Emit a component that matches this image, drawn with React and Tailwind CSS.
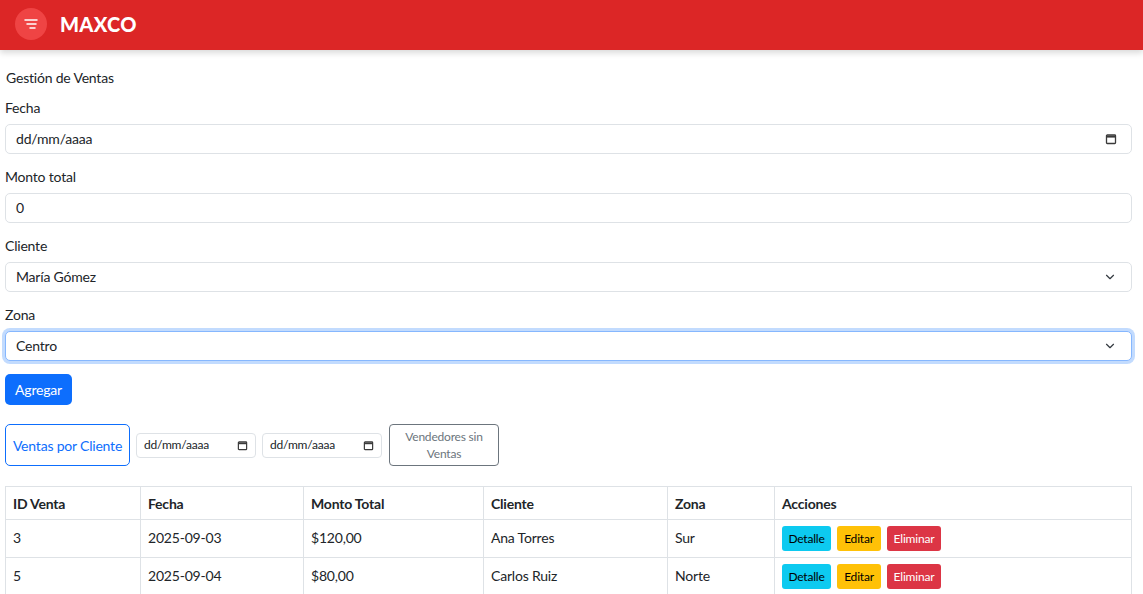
import React from 'react';
import { ChevronDown } from 'lucide-react';

const FONT = { fontFamily: 'Lato, "Noto Sans", sans-serif' };

const VENTAS = [
  { id: 3, fecha: '2025-09-03', monto: '$120,00', cliente: 'Ana Torres', zona: 'Sur' },
  { id: 5, fecha: '2025-09-04', monto: '$80,00', cliente: 'Carlos Ruiz', zona: 'Norte' },
];

const CalendarIcon = ({ size = 12 }) => (
  <svg width={size} height={size} viewBox="0 0 12 12" fill="none" stroke="#3a3a3a">
    <rect x="1.5" y="2" width="9" height="8.5" rx="0.8" strokeWidth="1.3" />
    <line x1="1.5" y1="3.6" x2="10.5" y2="3.6" strokeWidth="2" />
  </svg>
);

const Field = ({ label, children }) => (
  <div className="mb-[13px]">
    <div className="mb-[5px] h-[21px] text-[14px] leading-[20px] text-[#212529]">{label}</div>
    {children}
  </div>
);

const Box = ({ children, focus }) => (
  <div
    className={`flex h-[30px] items-center justify-between rounded-[5px] border bg-white pl-[10px] pr-[14px] text-[14px] leading-[20px] text-[#212529] ${
      focus ? 'border-[#86b7fe] shadow-[0_0_0_3px_rgba(13,110,253,0.25)]' : 'border-[#dee2e6]'
    }`}
  >
    {children}
  </div>
);

export default function App() {
  return (
    <div className="min-h-screen bg-white" style={FONT}>
      <header className="flex h-[50px] items-center gap-[13px] bg-[#dc2626] pb-[3px] pl-[15px] shadow-[0_3px_6px_rgba(0,0,0,0.15)]">
        <button className="flex h-8 w-8 items-center justify-center rounded-full bg-[#ef4444]">
          <svg width="14" height="12" viewBox="0 0 14 12" stroke="white" strokeWidth="1.5" strokeLinecap="round">
            <line x1="1" y1="2" x2="13" y2="2" />
            <line x1="3" y1="6" x2="12" y2="6" />
            <line x1="6" y1="10" x2="11" y2="10" />
          </svg>
        </button>
        <span className="text-[20px] font-black leading-none tracking-[0.3px] text-white">MAXCO</span>
      </header>

      <main className="pl-[5px] pr-[11px] pt-[18px] tracking-[-0.2px]">
        <div className="mb-[9px] h-[21px] pl-px text-[14px] leading-[20px] text-[#212529]">Gestión de Ventas</div>

        <Field label="Fecha">
          <Box>
            <span>dd/mm/aaaa</span>
            <CalendarIcon />
          </Box>
        </Field>
        <Field label="Monto total">
          <Box>
            <span>0</span>
          </Box>
        </Field>
        <Field label="Cliente">
          <Box>
            <span>María Gómez</span>
            <ChevronDown size={14} strokeWidth={2} className="text-[#343a40]" />
          </Box>
        </Field>
        <Field label="Zona">
          <Box focus>
            <span>Centro</span>
            <ChevronDown size={14} strokeWidth={2} className="text-[#343a40]" />
          </Box>
        </Field>

        <button className="h-[31px] w-[67px] rounded-[5px] bg-[#0d6efd] text-[14px] text-white">Agregar</button>

        <div className="mt-[19px] flex items-center gap-[6px]">
          <button className="h-[42px] w-[125px] rounded-[5px] border border-[#0d6efd] text-[14px] text-[#0d6efd]">
            Ventas por Cliente
          </button>
          {[0, 1].map((i) => (
            <div
              key={i}
              className="flex h-[25px] w-[120px] items-center justify-between rounded-[4px] border border-[#dee2e6] pl-[7px] pr-[7px] text-[12px] text-[#212529]"
            >
              <span>dd/mm/aaaa</span>
              <CalendarIcon size={11} />
            </div>
          ))}
          <button className="ml-px flex h-[42px] w-[110px] flex-col items-center justify-center rounded-[4px] border border-[#6c757d] text-[12px] leading-[17px] text-[#6c757d]">
            <span>Vendedores sin</span>
            <span>Ventas</span>
          </button>
        </div>

        <table className="mt-[20px] w-full border-collapse text-[14px] text-[#212529]">
          <thead>
            <tr className="h-[33px]">
              {[
                ['ID Venta', 'w-[135px]'],
                ['Fecha', 'w-[163px]'],
                ['Monto Total', 'w-[180px]'],
                ['Cliente', 'w-[184px]'],
                ['Zona', 'w-[107px]'],
                ['Acciones', ''],
              ].map(([h, w]) => (
                <th key={h} className={`${w} border border-[#dee2e6] px-[7px] text-left font-bold`}>
                  {h}
                </th>
              ))}
            </tr>
          </thead>
          <tbody>
            {VENTAS.map((v) => (
              <tr key={v.id} className="h-[38px]">
                <td className="border border-[#dee2e6] px-[7px] pb-[3px]">{v.id}</td>
                <td className="border border-[#dee2e6] px-[7px] pb-[3px]">{v.fecha}</td>
                <td className="border border-[#dee2e6] px-[7px] pb-[3px]">{v.monto}</td>
                <td className="border border-[#dee2e6] px-[7px] pb-[3px]">{v.cliente}</td>
                <td className="border border-[#dee2e6] px-[7px] pb-[3px]">{v.zona}</td>
                <td className="border border-[#dee2e6] px-[7px]">
                  <div className="flex gap-[6px]">
                    <button className="h-[25px] w-[49px] rounded-[3px] bg-[#0dcaf0] text-[12px] text-black">Detalle</button>
                    <button className="h-[25px] w-[44px] rounded-[3px] bg-[#ffc107] text-[12px] text-black">Editar</button>
                    <button className="h-[25px] w-[54px] rounded-[3px] bg-[#dc3545] text-[12px] text-white">Eliminar</button>
                  </div>
                </td>
              </tr>
            ))}
          </tbody>
        </table>
      </main>
    </div>
  );
}
